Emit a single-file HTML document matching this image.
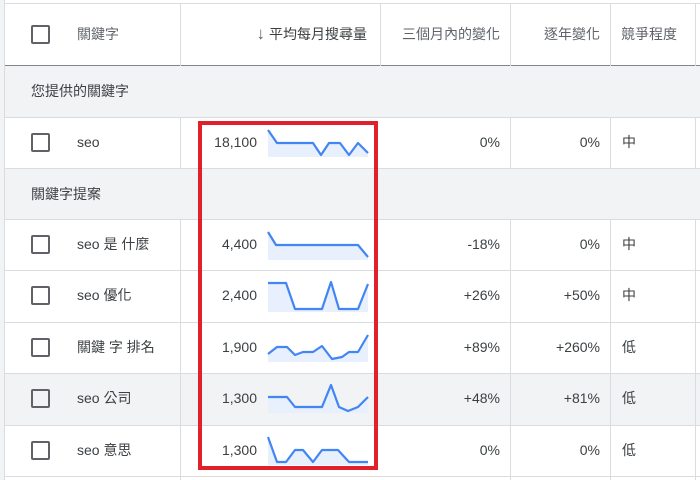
<!DOCTYPE html><html><head><meta charset="utf-8"><style>
*{margin:0;padding:0;box-sizing:border-box}
body{width:700px;height:480px;overflow:hidden;background:#fff;font-family:"Liberation Sans","Noto Sans CJK TC",sans-serif;font-size:14px;color:#3c4043;position:relative}
.a{position:absolute}
.row{position:absolute;left:5px;width:695px;border-bottom:1px solid #dadce0}
.g{background:#f1f3f4}
.cb{position:absolute;left:26px;width:19px;height:19px;border:2px solid #5f6368;border-radius:2px}
.t{position:absolute;white-space:nowrap;line-height:20px}
.r{text-align:right}
.vl{position:absolute;width:1px;background:#dadce0}
</style></head><body>
<div class="a" style="left:0;top:0;width:5px;height:480px;background:#f1f3f4;border-right:1px solid #dadce0"></div>
<div class="a" style="left:5px;top:3px;width:695px;height:1px;background:#dadce0"></div>
<div class="row" style="top:4px;height:62px;border-bottom:1px solid #80868b">
<div class="cb" style="top:21px"></div>
<div class="t" style="left:72px;top:20px;color:#5f6368">關鍵字</div>
<div class="t r" style="right:333px;top:20px;color:#3c4043"><span style="font-size:17px;color:#5f6368;margin-right:4px">↓</span>平均每月搜尋量</div>
<div class="t r" style="right:200px;top:20px;color:#5f6368">三個月內的變化</div>
<div class="t r" style="right:100px;top:20px;color:#5f6368">逐年變化</div>
<div class="t" style="left:616px;top:20px;color:#5f6368">競爭程度</div>
</div>
<div class="row g" style="top:66px;height:52px"><div class="t" style="left:26px;top:15px">您提供的關鍵字</div></div>
<div class="row" style="top:118px;height:51px"><div class="cb" style="top:15px"></div><div class="t" style="left:72px;top:14px">seo</div><div class="t r" style="right:443px;top:14px">18,100</div><div class="t r" style="right:200px;top:14px">0%</div><div class="t r" style="right:100px;top:14px">0%</div><div class="t" style="left:617px;top:14px">中</div></div>
<div class="row g" style="top:169px;height:51px"><div class="t" style="left:26px;top:15px">關鍵字提案</div></div>
<div class="row" style="top:220px;height:51px"><div class="cb" style="top:15px"></div><div class="t" style="left:72px;top:14px">seo 是 什麼</div><div class="t r" style="right:443px;top:14px">4,400</div><div class="t r" style="right:200px;top:14px">-18%</div><div class="t r" style="right:100px;top:14px">0%</div><div class="t" style="left:617px;top:14px">中</div></div>
<div class="row" style="top:271px;height:52px"><div class="cb" style="top:15px"></div><div class="t" style="left:72px;top:14px">seo 優化</div><div class="t r" style="right:443px;top:14px">2,400</div><div class="t r" style="right:200px;top:14px">+26%</div><div class="t r" style="right:100px;top:14px">+50%</div><div class="t" style="left:617px;top:14px">中</div></div>
<div class="row" style="top:323px;height:51px"><div class="cb" style="top:15px"></div><div class="t" style="left:72px;top:14px">關鍵 字 排名</div><div class="t r" style="right:443px;top:14px">1,900</div><div class="t r" style="right:200px;top:14px">+89%</div><div class="t r" style="right:100px;top:14px">+260%</div><div class="t" style="left:617px;top:14px">低</div></div>
<div class="row g" style="top:374px;height:52px"><div class="cb" style="top:15px"></div><div class="t" style="left:72px;top:14px">seo 公司</div><div class="t r" style="right:443px;top:14px">1,300</div><div class="t r" style="right:200px;top:14px">+48%</div><div class="t r" style="right:100px;top:14px">+81%</div><div class="t" style="left:617px;top:14px">低</div></div>
<div class="row" style="top:426px;height:51px"><div class="cb" style="top:15px"></div><div class="t" style="left:72px;top:14px">seo 意思</div><div class="t r" style="right:443px;top:14px">1,300</div><div class="t r" style="right:200px;top:14px">0%</div><div class="t r" style="right:100px;top:14px">0%</div><div class="t" style="left:617px;top:14px">低</div></div>
<div class="vl" style="left:180px;top:4px;height:62px"></div><div class="vl" style="left:380px;top:4px;height:62px"></div><div class="vl" style="left:510px;top:4px;height:62px"></div><div class="vl" style="left:610px;top:4px;height:62px"></div><div class="vl" style="left:695px;top:4px;height:62px"></div>
<div class="vl" style="left:180px;top:118px;height:51px"></div><div class="vl" style="left:510px;top:118px;height:51px"></div><div class="vl" style="left:610px;top:118px;height:51px"></div><div class="vl" style="left:695px;top:118px;height:51px"></div>
<div class="vl" style="left:180px;top:220px;height:260px"></div><div class="vl" style="left:510px;top:220px;height:260px"></div><div class="vl" style="left:610px;top:220px;height:260px"></div><div class="vl" style="left:695px;top:220px;height:260px"></div>
<svg class="a" style="left:0;top:0" width="700" height="480">
<g fill="#e8f0fe" stroke="none">
<polygon transform="translate(268,130)" points="0,0 9,13 45,13 53,25 61,13 72,13 81,25 90,13 100,23 100,27 0,27"/>
<polygon transform="translate(268,232)" points="0,0 8,13 90,13 100,25 100,28 0,28"/>
<polygon transform="translate(268,282)" points="0,1 18,1 27,27 42,27 54,27 63,0 71,27 90,27 100,2 100,30 0,30"/>
<polygon transform="translate(268,332)" points="0,22 9,15 19,15 27,23 35,20 45,20 54,14 64,27 74,25 81,20 90,20 100,3 100,30 0,30"/>
<polygon transform="translate(268,384)" points="0,13 19,13 27,23 54,23 63,1 71,23 80,27 90,23 100,13 100,29 0,29"/>
<polygon transform="translate(268,436)" points="0,1 9,26 18,26 27,14 35,14 45,26 54,14 70,14 81,26 100,26 100,29 0,29"/>
</g>
<g fill="none" stroke="#4285f4" stroke-width="2.2" stroke-linejoin="round">
<polyline transform="translate(268,130)" points="0,0 9,13 45,13 53,25 61,13 72,13 81,25 90,13 100,23"/>
<polyline transform="translate(268,232)" points="0,0 8,13 90,13 100,25"/>
<polyline transform="translate(268,282)" points="0,1 18,1 27,27 54,27 63,0 71,27 90,27 100,2"/>
<polyline transform="translate(268,332)" points="0,22 9,15 19,15 27,23 35,20 45,20 54,14 64,27 74,25 81,20 90,20 100,3"/>
<polyline transform="translate(268,384)" points="0,13 19,13 27,23 54,23 63,1 71,23 80,27 90,23 100,13"/>
<polyline transform="translate(268,436)" points="0,1 9,26 18,26 27,14 35,14 45,26 54,14 70,14 81,26 100,26"/>
</g>
<rect x="200" y="123" width="176" height="345" fill="none" stroke="#e0202a" stroke-width="4"/>
</svg>
</body></html>
